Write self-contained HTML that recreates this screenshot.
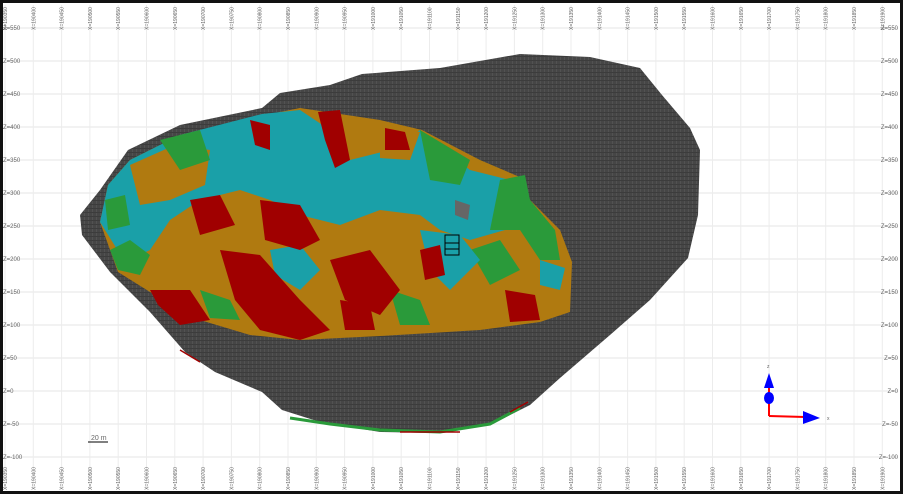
<!DOCTYPE html>
<html><head><style>
html,body{margin:0;padding:0;background:#fff}
svg{display:block}
text{font-family:"Liberation Sans",sans-serif;fill:#666}
</style></head><body>
<svg width="903" height="494" viewBox="0 0 903 494" xmlns="http://www.w3.org/2000/svg">
<defs>
<pattern id="g" width="4" height="4" patternUnits="userSpaceOnUse"><rect width="4" height="4" fill="#464646"/><rect width="1" height="4" fill="#525252"/><rect width="4" height="1" fill="#3c3c3c"/></pattern>
</defs>
<rect x="0" y="0" width="903" height="494" fill="#fff"/>
<g stroke="#e6e6e6" stroke-width="1">
<line x1="5" y1="28" x2="898" y2="28"/><line x1="5" y1="61" x2="898" y2="61"/><line x1="5" y1="94" x2="898" y2="94"/><line x1="5" y1="127" x2="898" y2="127"/><line x1="5" y1="160" x2="898" y2="160"/><line x1="5" y1="193" x2="898" y2="193"/><line x1="5" y1="226" x2="898" y2="226"/><line x1="5" y1="259" x2="898" y2="259"/><line x1="5" y1="292" x2="898" y2="292"/><line x1="5" y1="325" x2="898" y2="325"/><line x1="5" y1="358" x2="898" y2="358"/><line x1="5" y1="391" x2="898" y2="391"/><line x1="5" y1="424" x2="898" y2="424"/><line x1="5" y1="457" x2="898" y2="457"/>
</g>
<g id="vl" stroke="#ececec" stroke-width="1"></g>
<polygon fill="url(#g)" points="80,215 100,190 128,150 180,125 262,108 280,93 330,85 362,74 440,68 520,54 590,57 640,68 662,95 690,128 700,150 698,215 688,258 650,300 610,335 560,378 530,405 490,425 440,433 380,432 320,422 282,410 262,392 215,372 185,352 150,312 110,272 82,235"/>
<polygon fill="#b07a10" points="100,222 108,185 130,160 180,135 260,116 300,108 380,120 422,130 480,160 522,178 530,200 560,230 572,262 570,312 540,322 480,330 380,336 300,340 250,335 200,320 150,292 118,272"/>
<path fill="#1aa0a8" d="M100,222 L108,185 L130,160 L180,135 L262,114 L300,110 L330,130 L350,160 L390,150 L420,130 L470,170 L510,180 L522,200 L505,230 L470,240 L440,230 L420,215 L380,210 L340,225 L300,215 L270,200 L240,190 L200,200 L170,220 L150,250 L125,262 Z"/>
<path fill="#b07a10" d="M130,165 L175,145 L210,150 L205,185 L170,200 L140,205 Z M380,125 L420,132 L410,160 L380,158 Z"/>
<path fill="#2a9a3a" d="M110,250 L130,240 L150,255 L140,275 L118,270 Z M160,140 L200,130 L210,160 L180,170 Z M420,130 L470,160 L460,185 L430,180 Z M500,180 L525,175 L530,200 L555,230 L560,260 L540,260 L520,230 L490,230 Z M200,290 L230,300 L240,320 L210,318 Z M390,290 L420,300 L430,325 L400,325 Z M470,250 L500,240 L520,270 L490,285 Z M105,200 L125,195 L130,225 L108,230 Z"/>
<path fill="#1aa0a8" d="M420,230 L460,235 L480,260 L450,290 L430,270 Z M270,250 L300,245 L320,270 L300,290 L275,275 Z M540,260 L565,268 L560,290 L540,285 Z"/>
<path fill="#a00000" d="M318,112 L340,110 L350,160 L335,168 L325,140 Z M260,200 L300,205 L320,240 L300,250 L265,240 Z M190,200 L220,195 L235,225 L200,235 Z M220,250 L260,255 L300,300 L330,330 L300,340 L260,330 L235,300 Z M150,290 L190,290 L210,320 L180,325 L158,305 Z M330,260 L370,250 L400,290 L380,315 L345,300 Z M420,250 L440,245 L445,275 L425,280 Z M385,128 L405,132 L410,150 L385,150 Z M250,120 L270,125 L270,150 L255,145 Z M505,290 L535,295 L540,320 L510,322 Z M340,300 L370,305 L375,330 L345,330 Z"/>
<path fill="#666" d="M455,200 L470,205 L468,220 L455,215 Z"/>
<rect x="445" y="235" width="14" height="20" fill="none" stroke="#000" stroke-width="1"/>
<line x1="445" y1="243" x2="459" y2="243" stroke="#000"/><line x1="445" y1="249" x2="459" y2="249" stroke="#000"/>
<path fill="none" stroke="#2a9a3a" stroke-width="3" d="M290,418 L330,424 L380,430 L440,432 L490,424 L520,408"/>
<path fill="none" stroke="#a00000" stroke-width="1.5" d="M400,432 L460,432 M510,412 L528,402 M180,350 L200,362"/>
<line x1="769" y1="382" x2="769" y2="416" stroke="#f00" stroke-width="2"/>
<line x1="769" y1="416" x2="805" y2="417" stroke="#f00" stroke-width="2"/>
<polygon fill="#00f" points="803,411 820,418 803,424"/>
<polygon fill="#00f" points="764,388 769,373 774,388"/>
<ellipse cx="769" cy="398" rx="5" ry="6" fill="#00f"/>
<text x="767" y="368" font-size="5" fill="#000">z</text>
<text x="827" y="420" font-size="5" fill="#000">x</text>
<text x="91" y="440" font-size="7" fill="#000">20 m</text>
<line x1="88" y1="442" x2="108" y2="442" stroke="#000"/>
<g font-size="6">
<text x="3" y="30">Z=550</text><text x="3" y="63">Z=500</text><text x="3" y="96">Z=450</text><text x="3" y="129">Z=400</text><text x="3" y="162">Z=350</text><text x="3" y="195">Z=300</text><text x="3" y="228">Z=250</text><text x="3" y="261">Z=200</text><text x="3" y="294">Z=150</text><text x="3" y="327">Z=100</text><text x="3" y="360">Z=50</text><text x="3" y="393">Z=0</text><text x="3" y="426">Z=-50</text><text x="3" y="459">Z=-100</text>
</g>
<g font-size="6" text-anchor="end">
<text x="898" y="30">Z=550</text><text x="898" y="63">Z=500</text><text x="898" y="96">Z=450</text><text x="898" y="129">Z=400</text><text x="898" y="162">Z=350</text><text x="898" y="195">Z=300</text><text x="898" y="228">Z=250</text><text x="898" y="261">Z=200</text><text x="898" y="294">Z=150</text><text x="898" y="327">Z=100</text><text x="898" y="360">Z=50</text><text x="898" y="393">Z=0</text><text x="898" y="426">Z=-50</text><text x="898" y="459">Z=-100</text>
</g>
<g font-size="5" id="xl"></g>
<rect x="1.5" y="1.5" width="900" height="491" fill="none" stroke="#111" stroke-width="3"/>
</svg>
<script>
var ns="http://www.w3.org/2000/svg",vl=document.getElementById("vl"),xl=document.getElementById("xl");
for(var i=0;i<32;i++){var x=5+28.3*i,v="X="+(190350+50*i);
var l=document.createElementNS(ns,"line");l.setAttribute("x1",x);l.setAttribute("x2",x);l.setAttribute("y1",5);l.setAttribute("y2",489);vl.appendChild(l);
[30,490].forEach(function(y){var t=document.createElementNS(ns,"text");t.setAttribute("transform","translate("+(x+2)+","+y+") rotate(-90)");t.textContent=v;xl.appendChild(t);});}
</script>
</body></html>
